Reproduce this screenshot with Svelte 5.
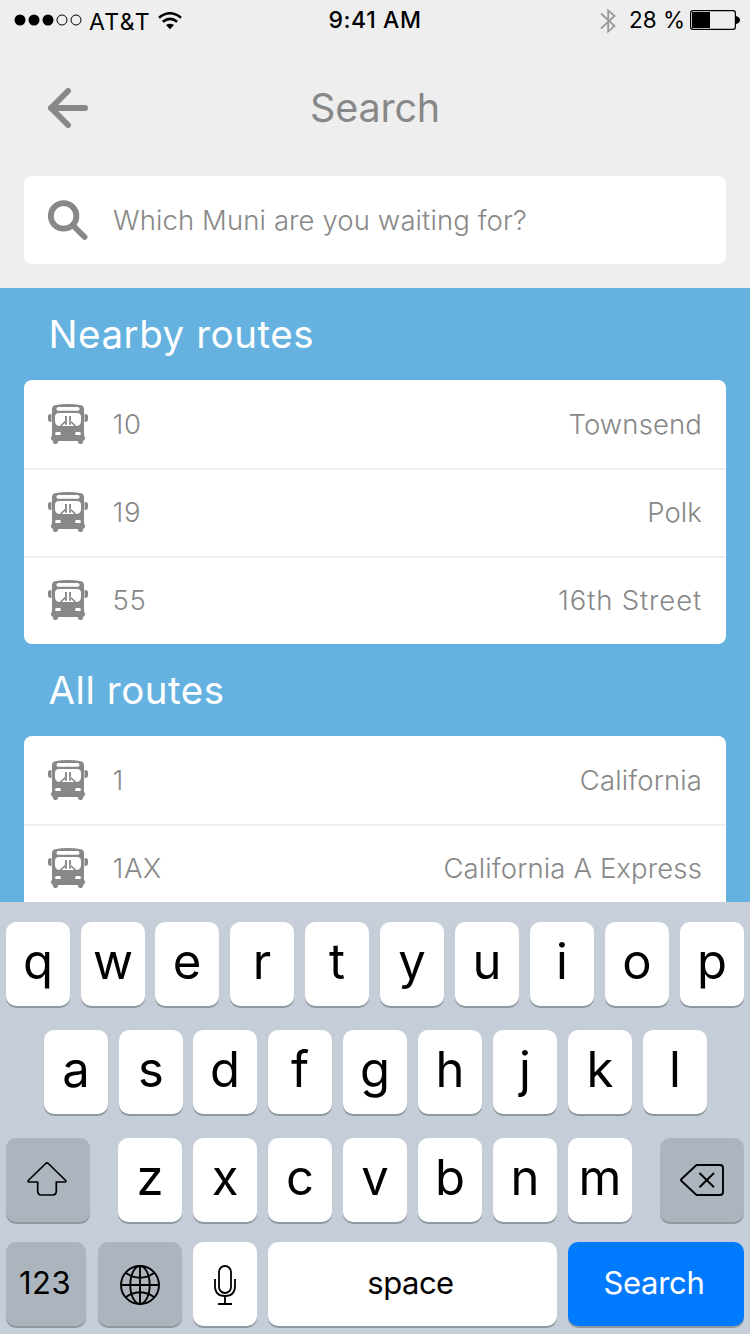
<script>
  const sections = [
    { title: 'Nearby routes', routes: [['10', 'Townsend'], ['19', 'Polk'], ['55', '16th Street']] },
    { title: 'All routes', routes: [['1', 'California'], ['1AX', 'California A Express']] }
  ];
  const top = 'qwertyuiop'.split('');
  const home = 'asdfghjkl'.split('');
  const bottom = 'zxcvbnm'.split('');
</script>

<div class="screen">
  <header>
    <div class="status">
      <div class="carrier">
        <svg class="dots" width="70" height="12" viewBox="0 0 70 12">
          <circle cx="6" cy="6" r="5.5" /><circle cx="20" cy="6" r="5.5" /><circle cx="34" cy="6" r="5.5" />
          <g fill="none" stroke="#000"><circle cx="48" cy="6" r="5" /><circle cx="62" cy="6" r="5" /></g>
        </svg>
        <span>AT&amp;T</span>
        <svg class="wifi" width="24" height="18" viewBox="0 0 24 18">
          <g fill="none" stroke="#000" stroke-width="2.5"><path d="M1 5.7Q12-3.2 23 5.7" /><path d="M4.8 9.8Q12 4 19.2 9.8" /></g>
          <path d="M8 13Q12 10.3 16 13L12 17.3Z" />
        </svg>
      </div>
      <time>9:41 AM</time>
      <div class="power">
        <svg width="16" height="26" viewBox="0 0 16 26" fill="none" stroke="#999" stroke-width="1.8"><path d="M1 5.5L14.5 18 8.2 23.6V2.4L14.5 8 1 20.5" /></svg>
        <span>28 %</span>
        <svg class="battery" width="50" height="20" viewBox="0 0 50 20">
          <rect x=".6" y=".6" width="44.8" height="18.8" rx="2.4" fill="none" stroke="#000" stroke-width="1.2" />
          <path d="M2 2H20V18H2ZM46 6Q50 7 50 10T46 14Z" />
        </svg>
      </div>
    </div>
    <div class="nav">
      <svg width="40" height="40" viewBox="0 0 40 40" fill="none" stroke="#888" stroke-width="6" stroke-linecap="round" stroke-linejoin="round"><path d="M20 3L3 20L20 37M3 20H37" /></svg>
      <h1>Search</h1>
    </div>
    <div class="field">
      <svg width="40" height="40" viewBox="0 0 40 40" fill="none" stroke="#888" stroke-width="5.8"><circle cx="15.6" cy="15.9" r="12.8" /><path d="M25 25.5L36.6 37" stroke-linecap="round" /></svg>
      <span>Which Muni are you waiting for?</span>
    </div>
  </header>

  <main>
    {#each sections as section, i}
      <h2>{section.title}</h2>
      <div class="list">
        {#each section.routes as [number, name]}
          <div class="route">
            <svg width="40" height="40" viewBox="0 0 40 40" fill="#888">
              <path fill-rule="evenodd" d="M4 5Q4 2 7 1.2Q20-1.2 33 1.2Q36 2 36 5V32Q37 32.5 37 34Q37 36.5 35 37V38.5Q34.5 40 32.5 40Q30 40 30 38V37H10V38Q10 40 7.5 40Q5.5 40 5 38.5V37Q3 36.5 3 34Q3 32.5 4 32ZM10 3Q8.5 3.2 8.5 4.9T10 6.8H30Q31.5 6.6 31.5 4.9T30 3ZM11 9Q7 9 7 13V17Q7 22 12 22H28Q33 22 33 17V13Q33 9 29 9ZM8.5 28Q7 28 7 29.5T8.5 31H11.5Q13 31 13 29.5T11.5 28ZM28.5 28Q27 28 27 29.5T28.5 31H31.5Q33 31 33 29.5T31.5 28Z" />
              <path d="M3.5 10Q0 10 0 12V15.5Q0 18 3.5 18ZM36.5 10Q40 10 40 12V15.5Q40 18 36.5 18ZM17 12H18.9V20.8H17ZM21.1 12H23V20.8H21.1ZM17.5 16.2V18.6L13.5 22.2H11.3ZM22.5 16.2V18.6L26.5 22.2H28.7Z" />
            </svg>
            <span class="number">{number}</span>
            <span class="name" class:ordinal={/^\d/.test(name)}>{name}</span>
          </div>
        {/each}
      </div>
    {/each}
  </main>

  <section class="keyboard">
    <div class="keys">{#each top as k}<div class="key">{k}</div>{/each}</div>
    <div class="keys home">{#each home as k}<div class="key">{k}</div>{/each}</div>
    <div class="keys lower">
      <div class="key dark shift">
        <svg width="40" height="34" viewBox="0 0 40 34" fill="none" stroke="#000" stroke-width="1.7" stroke-linejoin="round"><path d="M18.7 1.5Q20 .4 21.3 1.5L38.7 18.5Q39.3 20 38 20H29.3V29Q29.3 33 25.3 33H14.7Q10.7 33 10.7 29V20H2Q.7 20 1.3 18.5Z" /></svg>
      </div>
      {#each bottom as k}<div class="key">{k}</div>{/each}
      <div class="key dark delete">
        <svg width="44" height="32" viewBox="0 0 44 32" fill="none" stroke="#000" stroke-width="1.9" stroke-linejoin="round"><path d="M16.5 1H40Q43 1 43 4V28Q43 31 40 31H16.5L1.5 17Q.6 16 1.5 15Z" /><path d="M19.5 9L34 23.3M34 9L19.5 23.3" /></svg>
      </div>
    </div>
    <div class="keys last">
      <div class="key dark label digits">123</div>
      <div class="key dark globe">
        <svg width="40" height="40" viewBox="0 0 40 40" fill="none" stroke="#000" stroke-width="1.9"><circle cx="20" cy="20" r="19" /><ellipse cx="20" cy="20" rx="9.7" ry="19" /><path d="M20 1V39M1 20H39M6 8Q20 17.5 34 8M6 32Q20 22.5 34 32" /></svg>
      </div>
      <div class="key mic">
        <svg width="22" height="40" viewBox="0 0 22 40" fill="none" stroke="#000" stroke-width="1.8"><rect x="5" y="1" width="12" height="27" rx="6" /><path d="M1 14V21Q1 31 11 31T21 21V14M11 31V39M4 39H18" /></svg>
      </div>
      <div class="key label space">space</div>
      <div class="key label go">Search</div>
    </div>
  </section>
</div>

<style>
  :global(body) { margin: 0; }
  .screen { width: 750px; height: 1334px; overflow: hidden; display: flex; flex-direction: column; font-family: Inter, "Liberation Sans", sans-serif; background: #65b2e1; }
  svg { display: block; flex: none; }
  header { height: 288px; flex: none; background: #eee; box-sizing: border-box; }
  .status { height: 40px; display: grid; grid-template-columns: 1fr auto 1fr; grid-template-rows: 40px; align-items: center; font-size: 22.5px; line-height: 34px; white-space: nowrap; }
  .carrier { display: flex; align-items: center; padding-left: 14px; }
  .carrier span { margin-left: 5px; width: 64px; padding-top: 3px; font-size: 23px; letter-spacing: 1.4px; }
  .wifi { margin-left: 5px; margin-top: 2px; }
  time { font-weight: 500; font-size: 23px; letter-spacing: .6px; }
  .power { display: flex; align-items: center; justify-content: flex-end; padding-right: 10px; }
  .power > svg:first-child { margin-top: 2px; }
  .power span { margin: 0 7px 0 13px; width: 54px; }
  .nav { height: 136px; display: grid; grid-template-columns: 40px 1fr 40px; align-items: center; padding: 0 48px; }
  h1 { margin: 0; text-align: center; font-weight: 400; font-size: 39.5px; line-height: 48px; color: #888; letter-spacing: -.2px; }
  .field { height: 88px; margin: 0 24px; padding: 0 24px; display: flex; align-items: center; gap: 25px; background: #fff; border-radius: 8px; box-sizing: border-box; font-size: 27.5px; font-weight: 300; color: #888; white-space: nowrap; letter-spacing: .1px; }
  main { height: 614px; flex: none; overflow: hidden; }
  h2 { margin: 0; height: 92px; line-height: 92px; padding-left: 48.5px; font-size: 38.5px; font-weight: 400; color: #fff; letter-spacing: .55px; }
  .list { margin: 0 24px; background: #fff; border-radius: 8px; overflow: hidden; }
  .route { height: 88px; box-sizing: border-box; display: flex; align-items: center; padding: 0 24px; color: #888; font-size: 27.5px; }
  .route + .route { box-shadow: inset 0 2px #eee; }
  .number { margin-left: 24.5px; font-weight: 350; letter-spacing: .6px; }
  .name { margin-left: auto; font-weight: 300; letter-spacing: .12px; }
  .ordinal { letter-spacing: .85px; }
  .keyboard { height: 432px; flex: none; box-sizing: border-box; padding: 20px 6px 8px; display: flex; flex-direction: column; gap: 24px; background: linear-gradient(#cad0da, #c4cdd8 40px); }
  .keys { display: flex; gap: 11px; height: 84px; }
  .key { width: 64px; height: 84px; flex: none; box-sizing: border-box; padding-bottom: 5px; display: flex; align-items: center; justify-content: center; border-radius: 10px; background: #fff; box-shadow: 0 2px #8f979f; font-size: 49px; line-height: 60px; color: #000; }
  .keys:not(.lower):not(.last) .key:nth-child(3) { margin-left: -1px; }
  .home { padding-left: 38px; }
  .dark { background: #acb4be; }
  .shift { width: 84px; margin-right: 17px; padding: 0 3px 2px 0; }
  .delete { width: 84px; margin-left: 17px; padding: 0; }
  .last { margin-top: -4px; }
  .label { font-size: 31px; padding-bottom: 3px; }
  .digits { width: 80px; padding-right: 2px; letter-spacing: .4px; }
  .globe { width: 84px; margin-left: 1px; padding: 2px 0 0; }
  .mic { padding: 2px 0 0; }
  .space { width: 289px; padding-right: 4px; letter-spacing: -.5px; }
  .go { width: 176px; padding-right: 4px; color: #fff; background: #007aff; letter-spacing: -.3px; }
</style>
